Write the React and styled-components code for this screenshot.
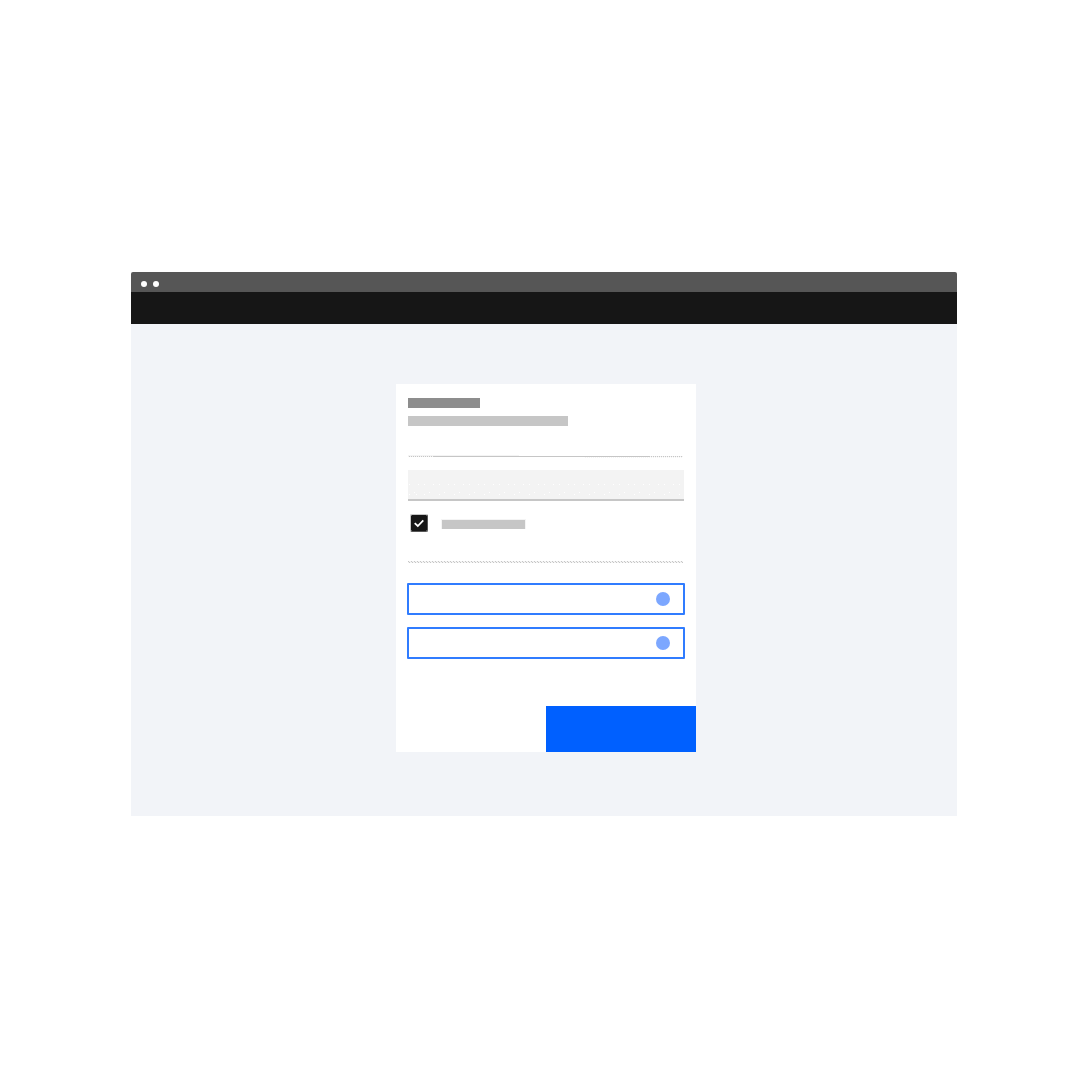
import styled, { createGlobalStyle } from 'styled-components';

export default function App(){
    return(
        <>
            <GlobalStyle />
            <Page>
                <Browser>
                    <TitleBar>
                        <Dot /><Dot />
                    </TitleBar>
                    <Header />
                    <Content>
                        <Form onSubmit={(event) =>{event.preventDefault();}}>
                            <Fields>
                                <Placeholder $width={72} $color="#8d8d8d" />
                                <Placeholder $width={160} $color="#c6c6c6" />
                                <Divider />
                                <TextInput type="text" aria-label="Name" />
                                <CheckRow>
                                    <CheckWrapper>
                                        <Checkbox type="checkbox" defaultChecked aria-label="Option" />
                                        <CheckMark viewBox="0 0 18 18" aria-hidden="true">
                                            <path d="M4.7 9.2 L7.8 12 L13.3 6.3" />
                                        </CheckMark>
                                    </CheckWrapper>
                                    <CheckLabel />
                                </CheckRow>
                                <DottedDivider />
                                <Options>
                                    <Option type="button" aria-label="First option"><Circle /></Option>
                                    <Option type="button" aria-label="Second option"><Circle /></Option>
                                </Options>
                            </Fields>
                            <Submit type="submit" aria-label="Submit" />
                        </Form>
                    </Content>
                </Browser>
            </Page>
        </>
    );
};

const GlobalStyle = createGlobalStyle`
*{
    box-sizing: border-box;
}
body{
    margin: 0;
    background: #ffffff;
    font-family: "Liberation Sans", Arial, sans-serif;
}
`;
const Page = styled.main`
min-height: 100vh;
display: flex;
align-items: center;
padding: 0 131px;
`;
const Browser = styled.section`
flex: 1;
border-radius: 2px 2px 0 0;
overflow: hidden;
`;
const TitleBar = styled.div`
height: 20px;
display: flex;
align-items: center;
gap: 6px;
padding: 4px 10px 0;
background: #565656;
`;
const Dot = styled.span`
width: 6px;
height: 6px;
border-radius: 50%;
background: #ffffff;
`;
const Header = styled.header`
height: 32px;
background: #161616;
`;
const Content = styled.div`
display: flex;
justify-content: center;
padding: 60px 0 64px 4px;
background: #f2f4f8;
`;
const Form = styled.form`
width: 300px;
display: flex;
flex-direction: column;
background: #ffffff;
`;
const Fields = styled.div`
display: flex;
flex-direction: column;
padding: 14px 12px 0;
`;
const Placeholder = styled.span`
width: ${props => props.$width}px;
height: 10px;
margin-bottom: 8px;
background: ${props => props.$color};
`;
const Divider = styled.hr`
width: 275px;
height: 3px;
margin: 21px 0 12px;
border: none;
background:
    linear-gradient(#c6c6c6, #c6c6c6) 26px 1px / 215px 1px no-repeat,
    repeating-linear-gradient(90deg, #f4f4f4 0 1px, #c6c6c6 1px 2px) 0 1px / 275px 1px no-repeat,
    linear-gradient(#f4f4f4, #f4f4f4) 0 0 / 111px 1px no-repeat,
    repeating-linear-gradient(90deg, #f4f4f4 0 1px, #ffffff 1px 2px) 177px 2px / 98px 1px no-repeat;
`;
// the specks in the field repeat every 15px
const TextInput = styled.input`
width: 100%;
height: 31px;
padding: 0 12px;
border: none;
border-bottom: 2px solid #c6c6c6;
border-radius: 0;
background:
    linear-gradient(#ffffff, #ffffff) 8px 24px / 1px 1px no-repeat,
    linear-gradient(90deg, transparent 10px, #ffffff 10px 11px, transparent 11px) 0 14px / 15px 1px repeat-x,
    linear-gradient(90deg, transparent 1px, #ffffff 1px 2px, transparent 2px) 0 14px / 15px 1px repeat-x,
    linear-gradient(90deg, transparent 6px, #ffffff 6px 7px, transparent 7px) 0 22px / 15px 1px repeat-x,
    linear-gradient(90deg, transparent 1px, #ffffff 1px 2px, transparent 2px) 0 24px / 15px 1px repeat-x,
    #f3f3f3;
`;
const CheckRow = styled.label`
display: flex;
align-items: center;
gap: 13px;
padding: 13px 2px 0;
`;
const CheckWrapper = styled.span`
display: grid;
width: 18px;
height: 18px;
`;
const Checkbox = styled.input`
grid-area: 1 / 1;
width: 18px;
height: 18px;
margin: 0;
appearance: none;
border: 1px solid;
border-color: #c6c6c6 #565656 #565656 #c6c6c6;
border-radius: 2px;
&:checked{
    background: #161616 padding-box;
}
`;
const CheckMark = styled.svg`
grid-area: 1 / 1;
width: 18px;
height: 18px;
pointer-events: none;
opacity: 0;
path{
    fill: none;
    stroke: #ffffff;
    stroke-width: 1.8;
}
input:checked + &{
    opacity: 1;
}
`;
const CheckLabel = styled.span`
width: 85px;
height: 10px;
margin-top: 2px;
border: 1px solid #f4f4f4;
border-bottom: none;
background: #c6c6c6 padding-box;
`;
const DottedDivider = styled.hr`
width: 275px;
height: 2px;
margin: 29px 0 20px;
border: none;
background:
    repeating-linear-gradient(90deg, #c6c6c6 0 1px, #f4f4f4 1px 3px) 0 0 / 100% 1px no-repeat,
    repeating-linear-gradient(90deg, #f4f4f4 0 1px, #c6c6c6 1px 2px, #f4f4f4 2px 3px) 0 1px / 100% 1px no-repeat;
`;
const Options = styled.div`
display: flex;
flex-direction: column;
gap: 12px;
margin: 0 -1px;
`;
const Option = styled.button`
height: 32px;
display: flex;
align-items: center;
justify-content: flex-end;
padding: 0 13px;
border: 2px solid #307cff;
border-radius: 1px;
background: #ffffff;
`;
const Circle = styled.span`
width: 14px;
height: 14px;
border-radius: 50%;
background: #7ca7ff;
`;
const Submit = styled.button`
width: 50%;
height: 46px;
margin-top: 47px;
align-self: flex-end;
border: none;
background: #0060ff;
`;
